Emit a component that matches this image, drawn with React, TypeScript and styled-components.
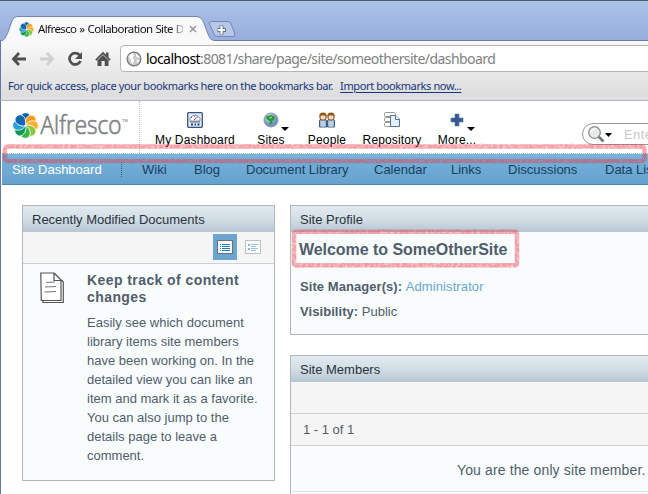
import React from "react";
import styled, { createGlobalStyle } from "styled-components";

const Global = createGlobalStyle`
  * { box-sizing: border-box; }
  html, body { margin: 0; padding: 0; overflow: hidden; background: #fff; }
  body { font-family: "Liberation Sans", Arial, sans-serif; font-size: 13px; color: #515d6b; }
  svg { display: block; flex: none; }
`;

const Window = styled.div`
  position: relative;
  width: 648px;
  height: 494px;
  overflow: hidden;
  display: flex;
  flex-direction: column;
  white-space: nowrap;
`;

const TabStrip = styled.div`
  height: 41px;
  flex: none;
  border-top: 1px solid #555a63;
  background: linear-gradient(#a9c3e9, #98addb);
`;

const TabRow = styled.div`
  display: grid;
  grid-template-columns: 648px;
  height: 40px;
  & > * { grid-area: 1 / 1; }
`;

const TabContent = styled.div`
  display: flex;
  align-items: center;
  height: 24px;
  margin: 16px 0 0 19px;
  font: 11.5px "Noto Sans", Tahoma, sans-serif;
  color: #111;
`;

const TabTitle = styled.div`
  width: 145px;
  margin-left: 4px;
  overflow: hidden;
  letter-spacing: -0.6px;
  word-spacing: 0.5px;
  line-height: 18px;
  mask-image: linear-gradient(90deg, #000 132px, transparent 150px);
`;

const Chrome = styled.div`
  flex: none;
  height: 60px;
  border-left: 1px solid #6577a8;
  border-bottom: 1px solid #b3b6c0;
  background: linear-gradient(#f9f9f9, #dedede 52px);
  font-family: "Noto Sans", Tahoma, sans-serif;
`;

const Toolbar = styled.div`
  display: flex;
  align-items: center;
  height: 35px;
  padding: 0 0 0 10px;
  gap: 12px;
`;

const Omnibox = styled.div`
  display: flex;
  align-items: center;
  height: 27px;
  width: 550px;
  flex: none;
  margin-left: -3px;
  padding-left: 5px;
  border: 1px solid #b5b5b5;
  border-radius: 4px;
  background: #fff;
`;

const Url = styled.div`
  margin-left: 4px;
  font-size: 14px;
  line-height: 20px;
  letter-spacing: -0.57px;
  color: #808080;
  b { font-weight: 400; color: #000; }
`;

const Bookmarks = styled.div`
  padding-left: 7px;
  font-size: 11px;
  line-height: 20px;
  letter-spacing: -0.37px;
  color: #17367c;
  u { margin-left: 7px; letter-spacing: -0.38px; text-underline-offset: 2px; }
`;

const Page = styled.div`
  flex: 1;
  border-left: 1px solid #6577a8;
  padding-left: 1px;
  background: #fff;
`;

const Header = styled.div`
  display: flex;
  height: 53px;
  border-bottom: 1px dotted #a9b4bc;
`;

const Brand = styled.div`
  width: 138px;
  flex: none;
  border-right: 1px dotted #c4c4c4;
`;

const Menu = styled.div`
  display: flex;
  padding-top: 11px;
`;

const MenuItem = styled.div<{ $w: number; $gap?: number }>`
  width: ${(p) => p.$w}px;
  margin-left: ${(p) => p.$gap ?? 0}px;
  display: flex;
  flex-direction: column;
  align-items: center;
  color: #000;
  font-size: 12px;
  line-height: 16px;
  letter-spacing: 0.15px;
  span { margin-top: 4px; }
`;

const IconCell = styled.div`
  position: relative;
`;

const Caret = styled.i`
  position: absolute;
  left: 18px;
  top: 15px;
  border: 4px solid transparent;
  border-top-color: #000;
  border-bottom: 0;
`;

const Search = styled.div`
  display: flex;
  align-items: center;
  width: 120px;
  flex: none;
  height: 22px;
  margin: 22px 0 0 100px;
  padding-left: 4px;
  border: 1px solid #999;
  border-radius: 11px;
  color: #c8c8c8;
  span { margin-left: 11px; letter-spacing: 0.4px; }
`;

const SiteNav = styled.div`
  display: flex;
  align-items: center;
  height: 31px;
  padding-left: 10px;
  border-bottom: 1px solid #4f8ab5;
  background: linear-gradient(#76b4dc, #67a1cc);
  color: #17405f;
`;

const NavItem = styled.div<{ $w: number; $active?: boolean }>`
  width: ${(p) => p.$w}px;
  flex: none;
  line-height: 16px;
  margin-top: 1px;
  color: ${(p) => (p.$active ? "#fff" : "inherit")};
`;

const NavDivider = styled.div`
  width: 21px;
  flex: none;
  height: 15px;
  border-left: 1px dotted #2f6187;
`;

const Columns = styled.div`
  display: flex;
  align-items: flex-start;
  gap: 15px;
  padding: 20px 0 0 20px;
`;

const Column = styled.div<{ $w: number }>`
  width: ${(p) => p.$w}px;
  flex: none;
  display: flex;
  flex-direction: column;
  gap: 20px;
`;

const Panel = styled.section<{ $h: number }>`
  height: ${(p) => p.$h}px;
  border: 1px solid #b3b6b7;
  background: #f8fcfd;
`;

const PanelTitle = styled.h2`
  margin: 0;
  height: 26px;
  padding-left: 9px;
  background: linear-gradient(#e2eaf0, #d2dee5 50%, #b6c6d3);
  font-size: 13px;
  line-height: 27px;
  font-weight: 400;
  color: #2b323c;
`;

const PanelBar = styled.div`
  display: flex;
  align-items: center;
  height: 32px;
  border-bottom: 1px solid #d0d1d2;
  background: #f5f5f5;
`;

const BarTools = styled(PanelBar)`
  justify-content: flex-end;
  padding-right: 9px;
  gap: 4px;
`;

const ViewButton = styled.div<{ $on?: boolean }>`
  display: flex;
  align-items: center;
  justify-content: center;
  width: 24px;
  height: 26px;
  margin-bottom: 2px;
  background: ${(p) => (p.$on ? "#6ca5ce" : "transparent")};
`;

const Tip = styled.div`
  display: flex;
  padding: 8px 0 0 17px;
  gap: 23px;
`;

const TipTitle = styled.h3`
  margin: 0;
  font-size: 14px;
  line-height: 17px;
  letter-spacing: 0.42px;
`;

const TipText = styled.p`
  margin: 7px 0 0;
  line-height: 19px;
`;

const Welcome = styled.h1`
  margin: 8px 0 0 8px;
  font-size: 16px;
  line-height: 20px;
  letter-spacing: -0.05px;
`;

const Field = styled.div<{ $top: number }>`
  margin: ${(p) => p.$top}px 0 0 9px;
  line-height: 15px;
  b { letter-spacing: 0.06px; }
  a { color: #6ca5ce; letter-spacing: 0.1px; }
`;

const Count = styled.div`
  padding-left: 12px;
`;

const MemberRow = styled.div`
  height: 46px;
  padding-left: 166px;
  border-bottom: 1px solid #e3e6e8;
  font-size: 14px;
  line-height: 48px;
  letter-spacing: 0.13px;
`;

const Markings = styled.svg`
  position: absolute;
  left: 0;
  top: 0;
  pointer-events: none;
`;

const petals = ["#0d63b0", "#f99d1c", "#fbb034", "#8dc63f", "#39b54a", "#0a9a54", "#2a9fd8", "#1565b0"];

const Flower = ({ size }: { size: number }) => (
  <svg width={size} height={size} viewBox="-13 -13 26 26">
    {petals.map((color, i) => (
      <path
        key={color}
        d="M0 0C-5.500 -3 -5.500 -12.800 .5 -12.800C6.500 -12.800 7 -6.500 4 -3.500Q2 -1 0 0Z"
        fill={color}
        stroke="#fff"
        strokeWidth=".8"
        transform={`rotate(${i * 45 - 5})`}
      />
    ))}
    <circle r="1" fill="#fff" />
  </svg>
);

const TabShape = () => (
  <svg width="648" height="40">
    <path d="M0 39.5H648" stroke="#6a7ba9" />
    <path
      d="M209 22Q210 20.500 212 20.500H228Q230 20.500 231 23L235 33Q235 35.500 233 35.500H218Q215 35.500 214 33Z"
      fill="#b7c8e7" stroke="#7487b4"
    />
    <path d="M221.500 24.500V33.500M217.500 29H226" stroke="#66758f" strokeWidth="4" />
    <path d="M221.500 25V33M218 29H225" stroke="#fff" strokeWidth="2.200" />
    <path d="M0 40.500C5 39 6 36 8 31L12 20Q13.500 15.500 17 15.500H197Q201 15.500 203 20L208 33Q210 39.500 215 39.500V41H0Z" fill="#f9f9f9" />
    <path d="M0 40.500C5 39 6 36 8 31L12 20Q13.500 15.500 17 15.500H197Q201 15.500 203 20L208 33Q210 39.500 215 39.500" fill="none" stroke="#7385b0" />
  </svg>
);

const Arrow = ({ color, flip }: { color: string; flip?: boolean }) => (
  <svg width="16" height="16" viewBox="0 0 16 16">
    <path
      d="M8 2L2.500 8L8 14M3 8H15"
      fill="none" stroke={color} strokeWidth="2.800"
      transform={flip ? "translate(16 0) scale(-1 1)" : undefined}
    />
  </svg>
);

const Reload = () => (
  <svg width="16" height="16" viewBox="0 0 16 16">
    <path d="M12.800 4.300A5.700 5.700 0 1 0 13.500 10" fill="none" stroke="#505050" strokeWidth="2.700" />
    <path d="M15 1V8H8Z" fill="#505050" />
  </svg>
);

const Home = () => (
  <svg width="16" height="16" viewBox="0 0 16 16">
    <path d="M8 .8L11 3.800V1.500H13.500V6.200L15.800 8.500L14.500 9.500H13.500V15H9.700V10H6.500V15H2.500V9.500H1.400L.2 8.500Z" fill="#505050" />
    <path d="M2.300 9L8 3.700L13.700 9" fill="none" stroke="#e8e8e8" strokeWidth=".7" />
  </svg>
);

const Globe = () => (
  <svg width="16" height="16" viewBox="0 0 16 16">
    <circle cx="8" cy="8" r="6.900" fill="#c9c9c9" stroke="#777" strokeWidth="1.300" />
    <path d="M2.500 5L6 2L8 4L6.500 7L8.500 9L6.500 13L5.500 12L4.500 8ZM10 2.500L13.500 6L12 7L10 5ZM11 9L13.500 9L11 12.500Z" fill="#fff" />
  </svg>
);

const Gauge = () => (
  <svg width="16" height="16" viewBox="0 0 16 16">
    <rect x=".7" y=".7" width="14.600" height="14.600" rx="1" fill="#e3ecf6" stroke="#35527f" strokeWidth="1.300" />
    <path d="M3 9V6Q8 0 13 6V9Z" fill="#fff" stroke="#667b99" strokeWidth=".8" />
    <path d="M7 8L11 4.500" stroke="#c33" />
    <path d="M4 5.500H5M7 4.200H8M3 10H13" stroke="#536a8c" />
    <path d="M4 12.500H6M7.500 12.500H9M10.500 12.500H12.500" stroke="#263e66" strokeWidth="2" />
  </svg>
);

const World = () => (
  <svg width="16" height="16" viewBox="0 0 16 16">
    <defs>
      <radialGradient id="sea" cx=".4" cy=".3"><stop stopColor="#e5eff9" /><stop offset="1" stopColor="#6f94bb" /></radialGradient>
    </defs>
    <circle cx="8" cy="8" r="7" fill="url(#sea)" stroke="#8799b0" />
    <path d="M3 4.500Q6 2.500 9 3L12 5L11 8L9.500 8.500L9 11.500L7.500 13L6.500 9L3.500 7Z" fill="#299b37" />
    <path d="M6 5L9 4.500L8 7Z" fill="#a7d88f" />
  </svg>
);

const People = () => (
  <svg width="16" height="16" viewBox="0 0 16 16">
    {[0, 8].map((x) => (
      <g key={x} transform={`translate(${x} 0)`}>
        <path d="M.5 15V9Q.5 7.500 2 7.500H6Q7.500 7.500 7.500 9V15Z" fill="#9fb7d2" stroke="#405c83" />
        <path d="M3 9V15M5 9V15" stroke="#d8e5f1" />
        <rect x="1" y="2" width="6" height="6" rx="2" fill="#ffd9bd" stroke="#754b20" />
        <path d="M.5 5V3Q.5 .5 4 .5T7.500 3V5L6 3.500H2Z" fill="#8b5b16" />
      </g>
    ))}
  </svg>
);

const Repo = () => (
  <svg width="16" height="16" viewBox="0 0 16 16">
    <rect x=".5" y=".5" width="11" height="4" rx="1" fill="#fff" stroke="#999" />
    <rect x=".5" y="5.500" width="10" height="4" rx="1" fill="#fff" stroke="#999" />
    <rect x=".5" y="10.500" width="10" height="4" rx="1" fill="#fff" stroke="#999" />
    <path d="M6.500 3.500H11.500L15.500 7V14.500H6.500Z" fill="#e6eff7" stroke="#52759d" />
    <path d="M11.500 3.500V7.500H15.500" fill="#fff" stroke="#52759d" />
  </svg>
);

const Plus = () => (
  <svg width="16" height="16" viewBox="0 0 16 16">
    <path d="M6 2H10V6H14V10H10V14H6V10H2V6H6Z" fill="#34588e" stroke="#6181ae" strokeWidth=".7" />
  </svg>
);

const Magnifier = () => (
  <svg width="26" height="18" viewBox="0 0 26 18">
    <path d="M11 11L16.500 16.500" stroke="#777" strokeWidth="2.600" />
    <circle cx="7.500" cy="7.500" r="5.800" fill="#e8eaeb" stroke="#8a8a8a" strokeWidth="1.300" />
    <path d="M4 7Q4.500 4 8 4" fill="none" stroke="#fff" strokeWidth="1.500" />
    <path d="M18 8H25L21.500 12Z" fill="#000" />
  </svg>
);

const ListIcon = ({ detail }: { detail?: boolean }) => (
  <svg width="16" height="16" viewBox="0 0 16 16" opacity={detail ? 0.7 : 1}>
    <rect x=".5" y="1.500" width="15" height="13" fill="#fff" stroke={detail ? "#aaa" : "#64717d"} />
    {detail ? (
      <>
        <path d="M3 6H5M3 10H5" stroke="#42a1df" strokeWidth="2" />
        <path d="M6 5.500H13M6 7.500H11M6 9.500H13M6 11.500H11" stroke="#75b4df" />
      </>
    ) : (
      <>
        <path d="M3 5.500H4M3 7.500H4M3 9.500H4M3 11.500H4" stroke="#078bd8" />
        <path d="M5 5.500H13M5 7.500H13M5 9.500H13M5 11.500H13" stroke="#207fb8" />
      </>
    )}
  </svg>
);

const Pages = () => (
  <svg width="24" height="33" viewBox="0 0 24 33">
    <g fill="#fff" stroke="#555" strokeWidth="1.200">
      <path d="M3 28V30.500H23.300V10L21.500 8" />
      <path d="M.8 1H14L21 8.500V28.500H1.300Z" />
      <path d="M14 1V8.500H21.500L14.500 1.500" />
      <path d="M6 10.500L15 10M5 15L16 14.500M4.500 20L16 19.500" stroke="#777" strokeWidth="1" />
    </g>
  </svg>
);

const nav: [string, number][] = [
  ["Wiki", 52], ["Blog", 52], ["Document Library", 128], ["Calendar", 77],
  ["Links", 57], ["Discussions", 97], ["Data Lists", 80],
];

export default function App() {
  return (
    <Window>
      <Global />
      <TabStrip>
        <TabRow>
          <TabShape />
          <TabContent>
            <Flower size={15} />
            <TabTitle>Alfresco » Collaboration Site D</TabTitle>
            <svg width="20" height="10" viewBox="0 0 20 10">
              <path d="M7 2L13 8M13 2L7 8" stroke="#999" strokeWidth="1.500" />
            </svg>
          </TabContent>
        </TabRow>
      </TabStrip>
      <Chrome>
        <Toolbar>
          <Arrow color="#505050" />
          <Arrow color="#d0d0d0" flip />
          <Reload />
          <Home />
          <Omnibox>
            <Globe />
            <Url><b>localhost</b>:8081/share/page/site/someothersite/dashboard</Url>
          </Omnibox>
        </Toolbar>
        <Bookmarks>
          For quick access, place your bookmarks here on the bookmarks bar.<u>Import bookmarks now...</u>
        </Bookmarks>
      </Chrome>
      <Page>
        <Header>
          <Brand>
            <svg width="136" height="50">
              <g transform="translate(10.500 11.500)"><Flower size={26} /></g>
              <text x="38.500" y="33" fontFamily="Open Sans" fontWeight="300" fontSize="25" fill="#828486" stroke="#828486" strokeWidth=".7" textLength="81" lengthAdjust="spacingAndGlyphs">Alfresco</text>
              <text x="120" y="21" fontFamily="Liberation Sans" fontSize="4" fill="#666">TM</text>
            </svg>
          </Brand>
          <Menu>
            <MenuItem $w={90} $gap={10}><Gauge /><span>My Dashboard</span></MenuItem>
            <MenuItem $w={40} $gap={11}><IconCell><World /><Caret /></IconCell><span>Sites</span></MenuItem>
            <MenuItem $w={50} $gap={11}><People /><span>People</span></MenuItem>
            <MenuItem $w={70} $gap={5}><Repo /><span>Repository</span></MenuItem>
            <MenuItem $w={50} $gap={5}><IconCell><Plus /><Caret /></IconCell><span>More...</span></MenuItem>
          </Menu>
          <Search><Magnifier /><span>Enter</span></Search>
        </Header>
        <SiteNav>
          <NavItem $w={109} $active>Site Dashboard</NavItem>
          <NavDivider />
          {nav.map(([label, w]) => <NavItem key={label} $w={w}>{label}</NavItem>)}
        </SiteNav>
        <Columns>
          <Column $w={253}>
            <Panel $h={276}>
              <PanelTitle>Recently Modified Documents</PanelTitle>
              <BarTools>
                <ViewButton $on><ListIcon /></ViewButton>
                <ViewButton><ListIcon detail /></ViewButton>
              </BarTools>
              <Tip>
                <Pages />
                <div>
                  <TipTitle>Keep track of content<br />changes</TipTitle>
                  <TipText>
                    Easily see which document<br />library items site members<br />have been working on. In the<br />
                    detailed view you can like an<br />item and mark it as a favorite.<br />
                    You can also jump to the<br />details page to leave a<br />comment.
                  </TipText>
                </div>
              </Tip>
            </Panel>
          </Column>
          <Column $w={400}>
            <Panel $h={130}>
              <PanelTitle>Site Profile</PanelTitle>
              <Welcome>Welcome to SomeOtherSite</Welcome>
              <Field $top={19}><b>Site Manager(s):</b> <a>Administrator</a></Field>
              <Field $top={10}><b>Visibility:</b> Public</Field>
            </Panel>
            <Panel $h={160}>
              <PanelTitle>Site Members</PanelTitle>
              <PanelBar />
              <PanelBar><Count>1 - 1 of 1</Count></PanelBar>
              <MemberRow>You are the only site member.</MemberRow>
            </Panel>
          </Column>
        </Columns>
      </Page>
      <Markings width="648" height="494">
        <defs>
          <filter id="crayon" x="0" y="0" width="648" height="494" filterUnits="userSpaceOnUse" colorInterpolationFilters="sRGB">
            <feTurbulence type="fractalNoise" baseFrequency=".35" numOctaves="2" seed="4" result="n" />
            <feColorMatrix in="n" values="0 0 0 0 0  0 0 0 0 0  0 0 0 0 0  1.2 0 0 0 .25" result="a" />
            <feComposite in="SourceGraphic" in2="a" operator="in" result="t" />
            <feDisplacementMap in="t" in2="n" scale="1.500" xChannelSelector="R" yChannelSelector="G" />
          </filter>
        </defs>
        <g fill="none" stroke="#ea3a48" strokeOpacity=".5" strokeWidth="4.500" filter="url(#crayon)">
          <rect x="5" y="146.500" width="639.500" height="14.500" rx="3" />
          <rect x="294" y="231.800" width="223" height="33.500" rx="2" />
        </g>
      </Markings>
    </Window>
  );
}
